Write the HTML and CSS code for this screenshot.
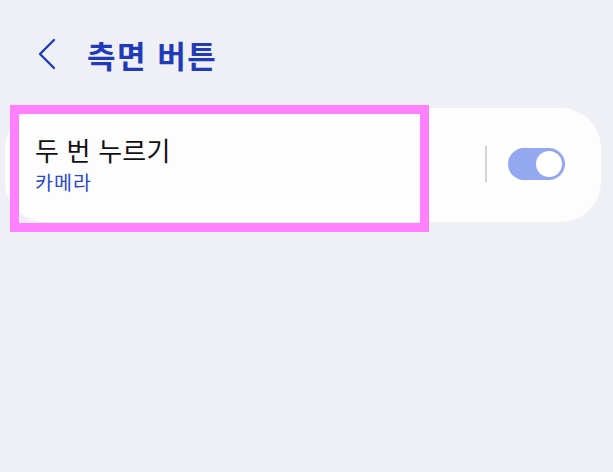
FILE: index.html
```html
<!DOCTYPE html>
<html lang="ko">
<head>
<meta charset="utf-8">
<link rel="stylesheet" href="styles.css">
</head>
<body>
<div class="page">
  <header class="header">
    <svg class="back" width="20" height="32" viewBox="0 0 20 32"><path d="M17 2 L3 16 L17 30" fill="none" stroke="#1f3bb8" stroke-width="2.4" stroke-linecap="round" stroke-linejoin="round"/></svg>
    <h1 class="title">측면 버튼</h1>
  </header>
  <div class="card">
    <div class="text">
      <div class="label">두 번 누르기</div>
      <div class="sub">카메라</div>
    </div>
    <div class="controls">
      <div class="divider"></div>
      <div class="toggle"><div class="knob"></div></div>
    </div>
    <div class="highlight"></div>
  </div>
</div>
</body>
</html>
```
FILE: styles.css
```css
html, body {
  margin: 0;
  padding: 0;
  background: #eff0f5;
  font-family: "Noto Sans CJK KR", "Noto Sans", sans-serif;
}
.page {
  width: 613px;
  height: 472px;
  padding: 0 12px 0 5px;
  box-sizing: border-box;
}
.header {
  display: flex;
  align-items: center;
  height: 108px;
  padding-left: 32px;
  box-sizing: border-box;
}
.back {
  margin-top: -1px;
}
.title {
  margin: 1px 0 0 30px;
  font-size: 31px;
  font-weight: 700;
  color: #1f3bb8;
  letter-spacing: 1.5px;
}
.card {
  position: relative;
  height: 114px;
  background: #fdfdfd;
  border-radius: 40px;
  display: flex;
  align-items: center;
  justify-content: space-between;
  padding: 0 36px 0 30px;
  box-sizing: border-box;
}
.text {
  display: flex;
  flex-direction: column;
  margin-top: -2px;
}
.label {
  font-size: 26px;
  color: #111;
  line-height: 34px;
  letter-spacing: 0.2px;
}
.sub {
  font-size: 19.5px;
  color: #2a48cc;
  line-height: 26px;
  margin-top: 2px;
  letter-spacing: 1px;
}
.controls {
  display: flex;
  align-items: center;
  gap: 21px;
  margin-top: -2px;
}
.divider {
  width: 2px;
  height: 36px;
  background: #d4d4d8;
}
.toggle {
  width: 57px;
  height: 32px;
  border-radius: 16px;
  background: #94a7f1;
  position: relative;
}
.knob {
  position: absolute;
  right: 3px;
  top: 3px;
  width: 26px;
  height: 26px;
  border-radius: 50%;
  background: #fff;
}
.highlight {
  position: absolute;
  left: 5px;
  top: -3px;
  width: 419px;
  height: 127px;
  border: 9px solid #ff80ff;
  box-sizing: border-box;
  pointer-events: none;
}
```
